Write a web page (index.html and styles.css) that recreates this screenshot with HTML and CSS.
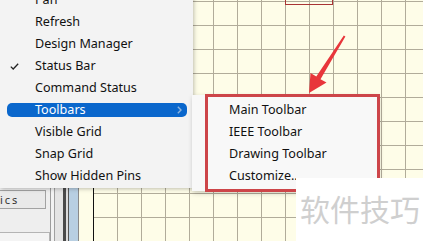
FILE: index.html
```html
<!DOCTYPE html>
<html lang="en">
<head>
  <meta charset="UTF-8">
  <meta name="viewport" content="width=device-width, initial-scale=1.0">
  <title>Schematic - View menu</title>
  <link rel="stylesheet" href="styles.css">
</head>
<body>
  <div class="screen">
    <div class="app">
      <div class="sidebar">
        <div class="tab">ics</div>
        <div class="box"></div>
      </div>
      <div class="splitter"></div>
      <div class="canvas">
        <div class="sheet"></div>
      </div>
    </div>

    <!-- part on the sheet, peeking in at the top -->
    <div class="part"></div>

    <ul class="menu">
      <li class="item">Pan</li>
      <li class="item">Refresh</li>
      <li class="item">Design Manager</li>
      <li class="item checked">
        <svg class="check" width="9" height="7" viewBox="0 0 9 7"><path d="M0.8 3.6 L3.2 6 L8.2 0.8" fill="none" stroke="#222" stroke-width="1.3"/></svg>
        Status Bar
      </li>
      <li class="item">Command Status</li>
      <li class="item active">
        Toolbars
        <svg class="chevron" width="5" height="8" viewBox="0 0 5 8"><path d="M0.8 0.8 L4 4 L0.8 7.2" fill="none" stroke="#8db4de" stroke-width="1.4"/></svg>
      </li>
      <li class="item">Visible Grid</li>
      <li class="item">Snap Grid</li>
      <li class="item">Show Hidden Pins</li>
    </ul>

    <ul class="submenu">
      <li class="item">Main Toolbar</li>
      <li class="item">IEEE Toolbar</li>
      <li class="item">Drawing Toolbar</li>
      <li class="item">Customize..</li>
    </ul>

    <div class="highlight-box"></div>

    <svg class="arrow" width="423" height="241" viewBox="0 0 423 241">
      <polygon points="309,93 310.5,73 316.3,76.4 343.8,35.6 345.4,36.6 320.5,79.2 326.5,82.6" fill="#e8363b"/>
    </svg>

    <div class="watermark">软件技巧</div>
  </div>
</body>
</html>
```

FILE: styles.css
```css
body {
  margin: 0;
  font-family: "Noto Sans", "Noto Sans CJK SC", sans-serif;
}
.screen {
  position: relative;
  width: 423px;
  height: 241px;
  overflow: hidden;
  background: #fefde8;
}
.app {
  display: flex;
  height: 100%;
}
.sidebar {
  width: 50px;
  background: #eeeeee;
  padding-top: 190px;
  box-sizing: border-box;
}
.tab {
  height: 19px;
  width: 46px;
  box-sizing: border-box;
  border: 1px solid #a2a2a2;
  border-left: none;
  background: #e9e9e9;
  font-size: 11px;
  line-height: 17px;
  letter-spacing: 2px;
  color: #333;
}
.box {
  margin-top: 23px;
  height: 30px;
  border: 1px solid #b4b4b4;
  border-left: none;
  background: #f4f4f4;
}
.splitter {
  width: 29px;
  background: linear-gradient(to right,
    #9c9c9c 0 1px, #f2f2f2 1px 4px, #a0a0a0 4px 5px, #e4e4e4 5px 13px,
    #4a4a4a 13px 16px, #dcdcdc 16px 18px, #555 18px 19px,
    #b8cfe2 19px 28px, #8a8a8a 28px 29px);
}
.canvas {
  flex: 1;
  padding-left: 14px;
}
.sheet {
  height: 100%;
  border-left: 1px solid #111;
  background-color: #fefde8;
  background-image:
    linear-gradient(to right, #b1ac9a 1px, transparent 1px),
    linear-gradient(to bottom, #b1ac9a 1px, transparent 1px);
  background-size: 24px 24px;
  background-position: 23px 1px;
}
.part {
  position: absolute;
  left: 285px;
  top: -4px;
  width: 46px;
  height: 8px;
  border: 1.5px solid #a93434;
  border-top: none;
}
.menu, .submenu {
  position: absolute;
  list-style: none;
  margin: 0;
  box-sizing: border-box;
  font-size: 12.6px;
  color: #111;
}
.menu {
  display: flex;
  flex-direction: column;
  left: 0;
  top: -12px;
  width: 193px;
  height: 200px;
  padding: 1px 0;
  background: #f3f3f3;
  box-shadow: 1px 1px 4px rgba(0, 0, 0, 0.25);
}
.menu .item {
  position: relative;
  height: 14px;
  line-height: 14px;
  margin: 4px 6px 4px 7px;
  padding-left: 28px;
  border-radius: 5px;
}
.menu .item.active {
  background: #0a67cc;
  color: #fff;
}
.check {
  position: absolute;
  left: 3px;
  top: 4px;
}
.chevron {
  position: absolute;
  right: 5px;
  top: 3px;
}
.submenu {
  left: 192px;
  top: 95px;
  width: 186px;
  height: 96px;
  padding: 4px 0 0;
  background: #f8f8f8;
  box-shadow: 1px 2px 5px rgba(0, 0, 0, 0.22);
}
.submenu .item {
  height: 22px;
  line-height: 22px;
  padding-left: 37px;
}
.highlight-box {
  position: absolute;
  left: 205px;
  top: 94px;
  width: 175px;
  height: 98px;
  box-sizing: border-box;
  border: 3px solid #cd4549;
}
.arrow {
  position: absolute;
  left: 0;
  top: 0;
}
.watermark {
  position: absolute;
  left: 296px;
  top: 178px;
  width: 127px;
  height: 63px;
  background: #fff;
  padding-left: 4px;
  box-sizing: border-box;
  font-family: "Noto Sans CJK SC", sans-serif;
  font-size: 30px;
  line-height: 60px;
  color: #cfcfcf;
}
```
